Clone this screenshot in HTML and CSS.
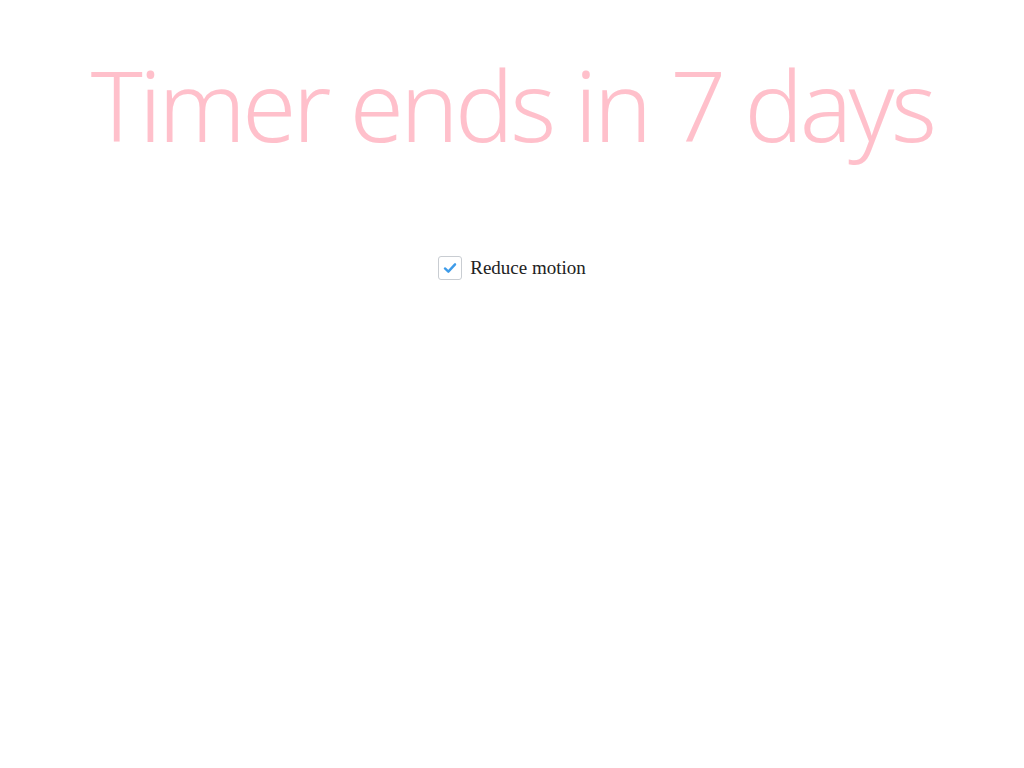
FILE: index.html
```html
<!DOCTYPE html>
<html lang="en">
<head>
<meta charset="utf-8">
<title>Timer</title>
<link rel="stylesheet" href="styles.css">
</head>
<body>
<main class="page">
  <h1 class="title">Timer ends in 7 days</h1>
  <label class="option">
    <span class="box">
      <svg viewBox="0 0 24 24" width="24" height="24" aria-hidden="true">
        <path d="M6.5 12.5 L10.2 16 L17.5 8" fill="none" stroke="#3d9be9" stroke-width="2.6" stroke-linecap="round" stroke-linejoin="round"/>
      </svg>
    </span>
    <span class="label">Reduce motion</span>
  </label>
</main>
</body>
</html>
```
FILE: styles.css
```css
html, body { margin: 0; padding: 0; background: #fff; }
.page { display: flex; flex-direction: column; align-items: center; }
.title {
  margin: 55px 0 0;
  font-family: "Noto Sans", sans-serif;
  font-weight: 300;
  font-size: 98px;
  line-height: 1;
  letter-spacing: -3.6px;
  color: #ffc0cb;
  white-space: nowrap;
}
.option {
  margin-top: 103px;
  display: flex;
  align-items: center;
  gap: 8px;
  font-family: "Liberation Serif", serif;
  font-size: 19px;
  color: #222;
}
.box {
  width: 22px; height: 22px;
  border: 1px solid #c9cdd2;
  border-radius: 3px;
  display: flex; align-items: center; justify-content: center;
  background: #fff;
}
.box svg { display: block; width: 22px; height: 22px; }
.label { line-height: 24px; }
```
